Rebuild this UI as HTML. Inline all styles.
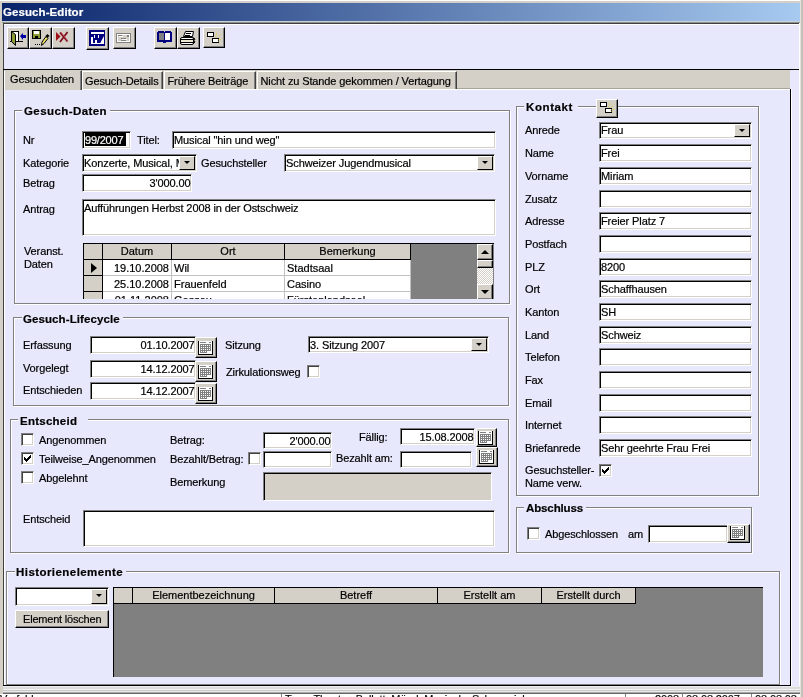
<!DOCTYPE html><html><head><meta charset="utf-8"><style>
*{margin:0;padding:0;box-sizing:border-box}
html,body{width:803px;height:697px;overflow:hidden}
body{position:relative;background:#d4d0c8;font-family:"Liberation Sans",sans-serif;font-size:11px;color:#000;-webkit-font-smoothing:antialiased;will-change:transform}
.l,.tb,.tab,.gh,.gc{-webkit-text-stroke:0.2px}
div{position:absolute}
.l{white-space:nowrap;line-height:13px;letter-spacing:-0.12px}
.tb{background:#fff;border:1px solid;border-color:#808080 #fff #fff #808080;box-shadow:inset 1px 1px #000,inset -1px -1px #d4d0c8;padding:2px 0 0 1px;line-height:13px;white-space:nowrap;overflow:hidden;letter-spacing:-0.1px}
.btn{background:#d4d0c8;border:1px solid;border-color:#fff #000 #000 #fff;box-shadow:inset -1px -1px #808080}
.dd{right:1px;top:1px;bottom:1px;width:16px;background:#d4d0c8;border:1px solid;border-color:#fff #000 #000 #fff}
.dd i{position:absolute;left:4px;top:4px;width:0;height:0;border-left:3px solid transparent;border-right:3px solid transparent;border-top:3px solid #000}
.grp{border:1px solid #808080;box-shadow:inset 1px 1px #fff,1px 1px #fff}
.gt{background:#e7e8fc;font-weight:bold;line-height:13px;padding-left:3px;white-space:nowrap;height:13px}
.ck{width:13px;height:13px;background:#fff;border:1px solid;border-color:#808080 #fff #fff #808080;box-shadow:inset 1px 1px #404040,inset -1px -1px #d4d0c8}
.tab{background:#d4d0c8;border-left:1px solid #fff;border-top:1px solid #fff;border-right:1px solid #404040;box-shadow:inset -1px 0 #808080;line-height:13px;white-space:nowrap;letter-spacing:-0.12px}
.gh{background:#d4d0c8;border-right:1px solid #000;border-bottom:1px solid #000;text-align:center;line-height:14px;white-space:nowrap;overflow:hidden}
.gc{background:#fff;border-right:1px solid #c0c0c0;border-bottom:1px solid #c0c0c0;line-height:14px;white-space:nowrap;overflow:hidden;padding:0 2px}
</style></head><body>
<div style="left:0;top:0;width:803px;height:1px;background:#fff"></div>
<div style="left:2px;top:3px;width:798px;height:18px;background:linear-gradient(to right,#0a246a,#a6caf0)"></div>
<div class="l" style="left:3px;top:6px;color:#fff;font-weight:bold;font-size:11.5px;letter-spacing:0.08px">Gesuch-Editor</div>
<div style="left:3px;top:23px;width:797px;height:670px;background:#e7e8fc;border-left:1px solid #404040;border-top:1px solid #404040"></div>
<div style="left:4px;top:24px;width:795px;height:1px;background:#fff"></div>
<div style="left:2px;top:21px;width:798px;height:1px;background:#c8d0d8"></div>
<div style="left:2px;top:22px;width:798px;height:1px;background:#909090"></div>
<div style="left:799px;top:23px;width:1px;height:670px;background:#fff"></div>
<div style="left:800px;top:0px;width:1px;height:697px;background:#e4e2dc"></div>
<div style="left:801px;top:0px;width:2px;height:697px;background:#c4c0b8"></div>
<div class="btn" style="left:7px;top:27px;width:22px;height:22px;"><svg width="22" height="22" viewBox="0 0 22 22" style="position:absolute;left:-1px;top:-1px" shape-rendering="crispEdges"><rect x="4" y="4" width="8" height="11" fill="#000"/><rect x="5" y="5" width="6" height="9" fill="#fff"/><rect x="3" y="14" width="13" height="1" fill="#000"/><polygon points="4.5,4.5 8.5,7.5 8.5,18.5 4.5,14.5" fill="#8c9a32" stroke="#000" shape-rendering="auto"/><polygon points="13,9 16,6 16,8 19,8 19,11 16,11 16,13" fill="#0000a0" shape-rendering="auto"/></svg></div>
<div class="btn" style="left:29px;top:27px;width:23px;height:22px;"><svg width="23" height="22" viewBox="0 0 23 22" style="position:absolute;left:-1px;top:-1px" shape-rendering="crispEdges"><rect x="3" y="3" width="9" height="9" fill="#000"/><rect x="4" y="4" width="7" height="7" fill="#8c9a32"/><rect x="5" y="4" width="5" height="3" fill="#fff"/><rect x="6" y="9" width="3" height="2" fill="#000"/><rect x="6" y="17" width="1" height="1" fill="#000"/><rect x="8" y="17" width="1" height="1" fill="#000"/><rect x="10" y="17" width="1" height="1" fill="#000"/><polygon points="12.5,18.5 13,15 17,9.5 19,11.5 15,16.5" fill="#e8e060" stroke="#000" shape-rendering="auto"/><polygon points="16.5,9 18.5,7 20.5,9 18.5,11" fill="#000" shape-rendering="auto"/></svg></div>
<div class="btn" style="left:52px;top:27px;width:23px;height:22px;"><svg width="23" height="22" viewBox="0 0 23 22" style="position:absolute;left:-1px;top:-1px" shape-rendering="crispEdges"><polygon points="4,5 8.5,9.5 4,14" fill="#a01018" shape-rendering="auto"/><path d="M8 5.5 L15.5 14.5 M15.5 5 L8 15" stroke="#80101c" stroke-width="1.8" shape-rendering="auto"/><path d="M9 5 L16 14" stroke="#d05060" stroke-width="0.8" shape-rendering="auto"/></svg></div>
<div class="btn" style="left:86px;top:27px;width:23px;height:23px;"><svg width="23" height="23" viewBox="0 0 23 23" style="position:absolute;left:-1px;top:-1px" shape-rendering="crispEdges"><rect x="3" y="3" width="16" height="16" fill="#000080"/><rect x="5" y="5" width="13" height="2" fill="#fff"/><rect x="5" y="10" width="2" height="7" fill="#fff"/><rect x="5" y="16" width="13" height="1" fill="#fff"/><rect x="9" y="13" width="2" height="4" fill="#fff"/><rect x="8" y="8" width="1" height="3" fill="#fff"/><rect x="12" y="8" width="1" height="3" fill="#fff"/><polygon points="18,9 18,16.5 14,16.5" fill="#fff" shape-rendering="auto"/></svg></div>
<div class="btn" style="left:113px;top:27px;width:23px;height:22px;"><svg width="23" height="22" viewBox="0 0 23 22" style="position:absolute;left:-1px;top:-1px" shape-rendering="crispEdges"><rect x="3.5" y="6.5" width="14" height="9" fill="none" stroke="#808080" shape-rendering="auto"/><rect x="4.5" y="7.5" width="12" height="7" fill="none" stroke="#fff" shape-rendering="auto"/><rect x="6" y="9" width="4" height="1" fill="#fff"/><rect x="9" y="12" width="5" height="1" fill="#fff"/><rect x="9" y="14" width="5" height="1" fill="#fff"/><rect x="5" y="8" width="4" height="1" fill="#808080"/><rect x="8" y="11" width="5" height="1" fill="#808080"/><rect x="8" y="13" width="5" height="1" fill="#808080"/><rect x="14" y="8" width="2" height="2" fill="#808080"/></svg></div>
<div class="btn" style="left:154px;top:27px;width:23px;height:22px;"><svg width="23" height="22" viewBox="0 0 23 22" style="position:absolute;left:-1px;top:-1px" shape-rendering="crispEdges"><rect x="5" y="6" width="5" height="7" fill="#808080"/><rect x="11" y="6" width="5" height="7" fill="#fff"/><rect x="3" y="5" width="2" height="9" fill="#000080"/><rect x="4" y="4" width="6" height="2" fill="#000080"/><rect x="11" y="4" width="6" height="2" fill="#000080"/><rect x="16" y="5" width="2" height="9" fill="#000080"/><rect x="3" y="13" width="15" height="2" fill="#000080"/><rect x="10" y="5" width="1" height="10" fill="#000080"/><rect x="9" y="15" width="3" height="1" fill="#000080"/></svg></div>
<div class="btn" style="left:177px;top:27px;width:23px;height:22px;"><svg width="23" height="22" viewBox="0 0 23 22" style="position:absolute;left:-1px;top:-1px" shape-rendering="crispEdges"><polygon points="8.5,4.5 16.5,4.5 15.5,9.5 6.5,9.5" fill="#fff" stroke="#000" shape-rendering="auto"/><path d="M9 6.5h5M8 8.5h5" stroke="#000" shape-rendering="auto"/><rect x="3.5" y="10.5" width="13" height="7" rx="1.5" fill="#fff" stroke="#000" shape-rendering="auto"/><rect x="4" y="13" width="12" height="2" fill="#ece8d0"/><path d="M4 12.5h12M4 15.5h12" stroke="#000" shape-rendering="auto"/><path d="M16 10.5l2 1.5-1 1.5 1 1.5-2 2" stroke="#000" fill="none" shape-rendering="auto"/></svg></div>
<div class="btn" style="left:203px;top:27px;width:22px;height:21px;"><svg width="22" height="21" viewBox="0 0 22 21" style="position:absolute;left:-1px;top:-1px" shape-rendering="crispEdges"><g transform="translate(0,2)"><rect x="4" y="3" width="7" height="5" fill="#000"/><rect x="5" y="4" width="5" height="3" fill="#fff"/><rect x="9" y="9" width="7" height="5" fill="#000"/><rect x="10" y="10" width="5" height="3" fill="#fff"/><path d="M13.5 3.5v3M12 7l2 2M15 8.5l3-3M15.5 10.5h3M15 11.5l2 2" stroke="#d8d070" stroke-width="1" shape-rendering="auto"/></g></svg></div>
<div style="left:3px;top:69px;width:796px;height:1px;background:#000"></div>
<div style="left:4px;top:70px;width:786px;height:19px;background:#d4d0c8"></div>
<div style="left:3px;top:89px;width:788px;height:597px;background:#e7e8fc;border-left:1px solid #404040;border-right:1px solid #000;border-bottom:1px solid #000"></div>
<div style="left:82px;top:89px;width:708px;height:1px;background:#fff"></div>
<div style="left:4px;top:89px;width:1px;height:596px;background:#fff"></div>
<div style="left:457px;top:88px;width:333px;height:1px;background:#a8a49c"></div>
<div style="left:791px;top:89px;width:1px;height:597px;background:#fff"></div>
<div class="tab" style="left:4px;top:70px;width:78px;height:20px;padding-left:5px;padding-top:2px;border-top-color:#d4d0c8">Gesuchdaten</div>
<div class="tab" style="left:82px;top:71px;width:81px;height:18px;padding-left:2px;padding-top:3px">Gesuch-Details</div>
<div class="tab" style="left:164px;top:71px;width:92px;height:18px;padding-left:2.5px;padding-top:3px">Frühere Beiträge</div>
<div class="tab" style="left:257px;top:71px;width:200px;height:18px;padding-left:2.5px;padding-top:3px">Nicht zu Stande gekommen / Vertagung</div>
<div class="grp" style="left:14px;top:110px;width:496px;height:194px;"></div>
<div style="left:22px;top:107px;width:88px;height:6px;background:#e7e8fc"></div>
<div class="l" style="left:24px;top:105px;font-weight:bold;font-size:11.5px;letter-spacing:0.42px">Gesuch-Daten</div>
<div class="l" style="left:23px;top:134px;">Nr</div>
<div class="tb" style="left:82px;top:131px;width:49px;height:18px;"><div style="left:2px;top:1px;width:41px;height:13px;background:#000;color:#fff;line-height:15px;letter-spacing:-0.2px">99/2007</div></div>
<div class="l" style="left:137px;top:134px;">Titel:</div>
<div class="tb" style="left:172px;top:131px;width:324px;height:18px;">Musical "hin und weg"</div>
<div class="l" style="left:23px;top:157px;">Kategorie</div>
<div class="tb" style="left:82px;top:154px;width:115px;height:18px;padding-top:2px">Konzerte, Musical, M<div class="dd"><i></i></div></div>
<div class="l" style="left:201px;top:157px;">Gesuchsteller</div>
<div class="tb" style="left:284px;top:154px;width:211px;height:18px;padding-top:2px">Schweizer Jugendmusical<div class="dd"><i></i></div></div>
<div class="l" style="left:23px;top:177px;">Betrag</div>
<div class="tb" style="left:82px;top:174px;width:110px;height:18px;text-align:right;padding-right:0.5px;">3'000.00</div>
<div class="l" style="left:23px;top:203px;">Antrag</div>
<div class="tb" style="left:82px;top:199px;width:414px;height:37px;">Aufführungen Herbst 2008 in der Ostschweiz</div>
<div class="l" style="left:24px;top:245px;line-height:13px">Veranst.<br>Daten</div>
<div style="left:83px;top:243px;width:411px;height:56px;background:#808080;border-left:1px solid #000;border-top:1px solid #000;overflow:hidden">
<div class="gh" style="left:0px;top:0;width:19px;height:16px"></div>
<div class="gh" style="left:19px;top:0;width:69px;height:16px">Datum</div>
<div class="gh" style="left:88px;top:0;width:113px;height:16px">Ort</div>
<div class="gh" style="left:201px;top:0;width:126px;height:16px">Bemerkung</div>
<div class="gh" style="left:0;top:16px;width:19px;height:16px"></div>
<div style="left:7px;top:19px;width:0;height:0;border-top:5.5px solid transparent;border-bottom:5.5px solid transparent;border-left:6px solid #000"></div>
<div class="gc" style="left:19px;top:16px;width:69px;height:16px;text-align:right;padding-top:1px">19.10.2008</div>
<div class="gc" style="left:88px;top:16px;width:113px;height:16px;padding-top:1px">Wil</div>
<div class="gc" style="left:201px;top:16px;width:126px;height:16px;padding-top:1px">Stadtsaal</div>
<div class="gh" style="left:0;top:32px;width:19px;height:16px"></div>
<div class="gc" style="left:19px;top:32px;width:69px;height:16px;text-align:right;padding-top:1px">25.10.2008</div>
<div class="gc" style="left:88px;top:32px;width:113px;height:16px;padding-top:1px">Frauenfeld</div>
<div class="gc" style="left:201px;top:32px;width:126px;height:16px;padding-top:1px">Casino</div>
<div class="gh" style="left:0;top:48px;width:19px;height:16px"></div>
<div class="gc" style="left:19px;top:48px;width:69px;height:16px;text-align:right;padding-top:1px">01.11.2008</div>
<div class="gc" style="left:88px;top:48px;width:113px;height:16px;padding-top:1px">Gossau</div>
<div class="gc" style="left:201px;top:48px;width:126px;height:16px;padding-top:1px">Fürstenlandsaal</div>
<div style="left:393px;top:0;width:16px;height:55px;background:repeating-conic-gradient(#fff 0 25%,#d4d0c8 0 50%) 0 0/2px 2px"></div>
<div class="btn" style="left:393px;top:0;width:16px;height:16px"><i style="position:absolute;left:3px;top:5px;border-left:4px solid transparent;border-right:4px solid transparent;border-bottom:4px solid #000"></i></div>
<div class="btn" style="left:393px;top:16px;width:16px;height:8px"></div>
<div class="btn" style="left:393px;top:40px;width:16px;height:16px"><i style="position:absolute;left:3px;top:5px;border-left:4px solid transparent;border-right:4px solid transparent;border-top:4px solid #000"></i></div>
</div>
<div class="grp" style="left:13px;top:317px;width:496px;height:89px;"></div>
<div style="left:22px;top:314px;width:101px;height:6px;background:#e7e8fc"></div>
<div class="l" style="left:23px;top:313px;font-weight:bold;font-size:11.5px;letter-spacing:0.09px">Gesuch-Lifecycle</div>
<div class="l" style="left:23px;top:339px;">Erfassung</div>
<div class="tb" style="left:90px;top:336px;width:106px;height:18px;text-align:right;padding-right:0.5px;">01.10.2007</div>
<div class="btn" style="left:195px;top:337px;width:22px;height:21px;"><svg width="22" height="21" viewBox="0 0 22 21" style="position:absolute;left:-1px;top:-1px" shape-rendering="crispEdges"><g transform="translate(0,0)"><rect x="3" y="4" width="15" height="14" fill="#000"/><rect x="4" y="4" width="13" height="13" fill="#fff"/><rect x="5" y="5" width="6" height="1" fill="#808080"/><rect x="14" y="5" width="2" height="1" fill="#808080"/><rect x="5" y="7" width="11" height="7" fill="#808080"/><rect x="5" y="14" width="7" height="2" fill="#808080"/><rect x="6" y="8" width="1" height="1" fill="#fff"/><rect x="8" y="8" width="1" height="1" fill="#fff"/><rect x="10" y="8" width="1" height="1" fill="#fff"/><rect x="12" y="8" width="1" height="1" fill="#fff"/><rect x="14" y="8" width="1" height="1" fill="#fff"/><rect x="6" y="10" width="1" height="1" fill="#fff"/><rect x="8" y="10" width="1" height="1" fill="#fff"/><rect x="10" y="10" width="1" height="1" fill="#fff"/><rect x="12" y="10" width="1" height="1" fill="#fff"/><rect x="14" y="10" width="1" height="1" fill="#fff"/><rect x="6" y="12" width="1" height="1" fill="#fff"/><rect x="8" y="12" width="1" height="1" fill="#fff"/><rect x="10" y="12" width="1" height="1" fill="#fff"/><rect x="12" y="12" width="1" height="1" fill="#fff"/><rect x="14" y="12" width="1" height="1" fill="#fff"/><rect x="6" y="14" width="1" height="1" fill="#fff"/><rect x="8" y="14" width="1" height="1" fill="#fff"/><rect x="10" y="14" width="1" height="1" fill="#fff"/></g></svg></div>
<div class="l" style="left:23px;top:362px;">Vorgelegt</div>
<div class="tb" style="left:90px;top:360px;width:106px;height:18px;text-align:right;padding-right:0.5px;">14.12.2007</div>
<div class="btn" style="left:195px;top:361px;width:22px;height:21px;"><svg width="22" height="21" viewBox="0 0 22 21" style="position:absolute;left:-1px;top:-1px" shape-rendering="crispEdges"><g transform="translate(0,0)"><rect x="3" y="4" width="15" height="14" fill="#000"/><rect x="4" y="4" width="13" height="13" fill="#fff"/><rect x="5" y="5" width="6" height="1" fill="#808080"/><rect x="14" y="5" width="2" height="1" fill="#808080"/><rect x="5" y="7" width="11" height="7" fill="#808080"/><rect x="5" y="14" width="7" height="2" fill="#808080"/><rect x="6" y="8" width="1" height="1" fill="#fff"/><rect x="8" y="8" width="1" height="1" fill="#fff"/><rect x="10" y="8" width="1" height="1" fill="#fff"/><rect x="12" y="8" width="1" height="1" fill="#fff"/><rect x="14" y="8" width="1" height="1" fill="#fff"/><rect x="6" y="10" width="1" height="1" fill="#fff"/><rect x="8" y="10" width="1" height="1" fill="#fff"/><rect x="10" y="10" width="1" height="1" fill="#fff"/><rect x="12" y="10" width="1" height="1" fill="#fff"/><rect x="14" y="10" width="1" height="1" fill="#fff"/><rect x="6" y="12" width="1" height="1" fill="#fff"/><rect x="8" y="12" width="1" height="1" fill="#fff"/><rect x="10" y="12" width="1" height="1" fill="#fff"/><rect x="12" y="12" width="1" height="1" fill="#fff"/><rect x="14" y="12" width="1" height="1" fill="#fff"/><rect x="6" y="14" width="1" height="1" fill="#fff"/><rect x="8" y="14" width="1" height="1" fill="#fff"/><rect x="10" y="14" width="1" height="1" fill="#fff"/></g></svg></div>
<div class="l" style="left:23px;top:384px;">Entschieden</div>
<div class="tb" style="left:90px;top:382px;width:106px;height:18px;text-align:right;padding-right:0.5px;">14.12.2007</div>
<div class="btn" style="left:195px;top:383px;width:22px;height:21px;"><svg width="22" height="21" viewBox="0 0 22 21" style="position:absolute;left:-1px;top:-1px" shape-rendering="crispEdges"><g transform="translate(0,0)"><rect x="3" y="4" width="15" height="14" fill="#000"/><rect x="4" y="4" width="13" height="13" fill="#fff"/><rect x="5" y="5" width="6" height="1" fill="#808080"/><rect x="14" y="5" width="2" height="1" fill="#808080"/><rect x="5" y="7" width="11" height="7" fill="#808080"/><rect x="5" y="14" width="7" height="2" fill="#808080"/><rect x="6" y="8" width="1" height="1" fill="#fff"/><rect x="8" y="8" width="1" height="1" fill="#fff"/><rect x="10" y="8" width="1" height="1" fill="#fff"/><rect x="12" y="8" width="1" height="1" fill="#fff"/><rect x="14" y="8" width="1" height="1" fill="#fff"/><rect x="6" y="10" width="1" height="1" fill="#fff"/><rect x="8" y="10" width="1" height="1" fill="#fff"/><rect x="10" y="10" width="1" height="1" fill="#fff"/><rect x="12" y="10" width="1" height="1" fill="#fff"/><rect x="14" y="10" width="1" height="1" fill="#fff"/><rect x="6" y="12" width="1" height="1" fill="#fff"/><rect x="8" y="12" width="1" height="1" fill="#fff"/><rect x="10" y="12" width="1" height="1" fill="#fff"/><rect x="12" y="12" width="1" height="1" fill="#fff"/><rect x="14" y="12" width="1" height="1" fill="#fff"/><rect x="6" y="14" width="1" height="1" fill="#fff"/><rect x="8" y="14" width="1" height="1" fill="#fff"/><rect x="10" y="14" width="1" height="1" fill="#fff"/></g></svg></div>
<div class="l" style="left:225px;top:339px;">Sitzung</div>
<div class="tb" style="left:308px;top:336px;width:181px;height:17px;padding-top:2px">3. Sitzung 2007<div class="dd"><i></i></div></div>
<div class="l" style="left:226px;top:366px;">Zirkulationsweg</div>
<div class="ck" style="left:307px;top:365px;"></div>
<div class="grp" style="left:10px;top:419px;width:499px;height:134px;"></div>
<div style="left:18px;top:416px;width:70px;height:6px;background:#e7e8fc"></div>
<div class="l" style="left:20px;top:415px;font-weight:bold;font-size:11.5px;letter-spacing:0.25px">Entscheid</div>
<div class="ck" style="left:21px;top:433px;"></div>
<div class="l" style="left:39px;top:434px;">Angenommen</div>
<div class="ck" style="left:21px;top:452px;"><svg width="7" height="7" style="position:absolute;left:2px;top:2px" viewBox="0 0 7 7" shape-rendering="crispEdges"><path d="M0 2h1v1h1v1h1v-1h1v-1h1v-1h1v-1h1v3h-1v1h-1v1h-1v1h-1v1h-1v-1h-1v-1h-1v-1h-1z" fill="#000"/></svg></div>
<div class="l" style="left:39px;top:453px;">Teilweise_Angenommen</div>
<div class="ck" style="left:21px;top:471px;"></div>
<div class="l" style="left:39px;top:472px;">Abgelehnt</div>
<div class="l" style="left:170px;top:434px;">Betrag:</div>
<div class="tb" style="left:263px;top:432px;width:69px;height:17px;text-align:right;padding-right:0.5px;">2'000.00</div>
<div class="l" style="left:170px;top:453px;">Bezahlt/Betrag:</div>
<div class="ck" style="left:248px;top:452px;"></div>
<div class="tb" style="left:263px;top:451px;width:69px;height:17px;"></div>
<div class="l" style="left:170px;top:476px;">Bemerkung</div>
<div class="tb" style="left:263px;top:472px;width:229px;height:29px;background:#d4d0c8;"></div>
<div class="l" style="left:359px;top:431px;">Fällig:</div>
<div class="tb" style="left:400px;top:428px;width:75px;height:17px;text-align:right;padding-right:0.5px;">15.08.2008</div>
<div class="btn" style="left:476px;top:428px;width:21px;height:19px;"><svg width="21" height="19" viewBox="0 0 21 19" style="position:absolute;left:-1px;top:-1px" shape-rendering="crispEdges"><g transform="translate(-1,-1)"><rect x="3" y="4" width="15" height="14" fill="#000"/><rect x="4" y="4" width="13" height="13" fill="#fff"/><rect x="5" y="5" width="6" height="1" fill="#808080"/><rect x="14" y="5" width="2" height="1" fill="#808080"/><rect x="5" y="7" width="11" height="7" fill="#808080"/><rect x="5" y="14" width="7" height="2" fill="#808080"/><rect x="6" y="8" width="1" height="1" fill="#fff"/><rect x="8" y="8" width="1" height="1" fill="#fff"/><rect x="10" y="8" width="1" height="1" fill="#fff"/><rect x="12" y="8" width="1" height="1" fill="#fff"/><rect x="14" y="8" width="1" height="1" fill="#fff"/><rect x="6" y="10" width="1" height="1" fill="#fff"/><rect x="8" y="10" width="1" height="1" fill="#fff"/><rect x="10" y="10" width="1" height="1" fill="#fff"/><rect x="12" y="10" width="1" height="1" fill="#fff"/><rect x="14" y="10" width="1" height="1" fill="#fff"/><rect x="6" y="12" width="1" height="1" fill="#fff"/><rect x="8" y="12" width="1" height="1" fill="#fff"/><rect x="10" y="12" width="1" height="1" fill="#fff"/><rect x="12" y="12" width="1" height="1" fill="#fff"/><rect x="14" y="12" width="1" height="1" fill="#fff"/><rect x="6" y="14" width="1" height="1" fill="#fff"/><rect x="8" y="14" width="1" height="1" fill="#fff"/><rect x="10" y="14" width="1" height="1" fill="#fff"/></g></svg></div>
<div class="l" style="left:336px;top:452px;">Bezahlt am:</div>
<div class="tb" style="left:400px;top:451px;width:72px;height:17px;"></div>
<div class="btn" style="left:476px;top:447px;width:22px;height:20px;"><svg width="22" height="20" viewBox="0 0 22 20" style="position:absolute;left:-1px;top:-1px" shape-rendering="crispEdges"><g transform="translate(0,-1)"><rect x="3" y="4" width="15" height="14" fill="#000"/><rect x="4" y="4" width="13" height="13" fill="#fff"/><rect x="5" y="5" width="6" height="1" fill="#808080"/><rect x="14" y="5" width="2" height="1" fill="#808080"/><rect x="5" y="7" width="11" height="7" fill="#808080"/><rect x="5" y="14" width="7" height="2" fill="#808080"/><rect x="6" y="8" width="1" height="1" fill="#fff"/><rect x="8" y="8" width="1" height="1" fill="#fff"/><rect x="10" y="8" width="1" height="1" fill="#fff"/><rect x="12" y="8" width="1" height="1" fill="#fff"/><rect x="14" y="8" width="1" height="1" fill="#fff"/><rect x="6" y="10" width="1" height="1" fill="#fff"/><rect x="8" y="10" width="1" height="1" fill="#fff"/><rect x="10" y="10" width="1" height="1" fill="#fff"/><rect x="12" y="10" width="1" height="1" fill="#fff"/><rect x="14" y="10" width="1" height="1" fill="#fff"/><rect x="6" y="12" width="1" height="1" fill="#fff"/><rect x="8" y="12" width="1" height="1" fill="#fff"/><rect x="10" y="12" width="1" height="1" fill="#fff"/><rect x="12" y="12" width="1" height="1" fill="#fff"/><rect x="14" y="12" width="1" height="1" fill="#fff"/><rect x="6" y="14" width="1" height="1" fill="#fff"/><rect x="8" y="14" width="1" height="1" fill="#fff"/><rect x="10" y="14" width="1" height="1" fill="#fff"/></g></svg></div>
<div class="l" style="left:23px;top:513px;">Entscheid</div>
<div class="tb" style="left:83px;top:510px;width:412px;height:37px;"></div>
<div class="grp" style="left:516px;top:106px;width:243px;height:390px;"></div>
<div style="left:524px;top:103px;width:54px;height:6px;background:#e7e8fc"></div>
<div class="l" style="left:526px;top:101px;font-weight:bold;font-size:11.5px;letter-spacing:0.6px">Kontakt</div>
<div class="btn" style="left:596px;top:99px;width:22px;height:19px;"><svg width="22" height="19" viewBox="0 0 22 19" style="position:absolute;left:-1px;top:-1px" shape-rendering="crispEdges"><g transform="translate(0,0)"><rect x="4" y="3" width="7" height="5" fill="#000"/><rect x="5" y="4" width="5" height="3" fill="#fff"/><rect x="9" y="9" width="7" height="5" fill="#000"/><rect x="10" y="10" width="5" height="3" fill="#fff"/><path d="M13.5 3.5v3M12 7l2 2M15 8.5l3-3M15.5 10.5h3M15 11.5l2 2" stroke="#d8d070" stroke-width="1" shape-rendering="auto"/></g></svg></div>
<div class="l" style="left:525px;top:124px;">Anrede</div>
<div class="tb" style="left:599px;top:122px;width:153px;height:17px;padding-top:1px">Frau<div class="dd"><i></i></div></div>
<div class="l" style="left:525px;top:147px;">Name</div>
<div class="tb" style="left:599px;top:144px;width:153px;height:18px;">Frei</div>
<div class="l" style="left:525px;top:170px;">Vorname</div>
<div class="tb" style="left:599px;top:167px;width:153px;height:18px;">Miriam</div>
<div class="l" style="left:525px;top:193px;">Zusatz</div>
<div class="tb" style="left:599px;top:190px;width:153px;height:18px;"></div>
<div class="l" style="left:525px;top:215px;">Adresse</div>
<div class="tb" style="left:599px;top:212px;width:153px;height:18px;">Freier Platz 7</div>
<div class="l" style="left:525px;top:238px;">Postfach</div>
<div class="tb" style="left:599px;top:235px;width:153px;height:18px;"></div>
<div class="l" style="left:525px;top:261px;">PLZ</div>
<div class="tb" style="left:599px;top:258px;width:153px;height:18px;">8200</div>
<div class="l" style="left:525px;top:283px;">Ort</div>
<div class="tb" style="left:599px;top:280px;width:153px;height:18px;">Schaffhausen</div>
<div class="l" style="left:525px;top:306px;">Kanton</div>
<div class="tb" style="left:599px;top:303px;width:153px;height:18px;">SH</div>
<div class="l" style="left:525px;top:329px;">Land</div>
<div class="tb" style="left:599px;top:326px;width:153px;height:18px;">Schweiz</div>
<div class="l" style="left:525px;top:351px;">Telefon</div>
<div class="tb" style="left:599px;top:348px;width:153px;height:18px;"></div>
<div class="l" style="left:525px;top:374px;">Fax</div>
<div class="tb" style="left:599px;top:371px;width:153px;height:18px;"></div>
<div class="l" style="left:525px;top:397px;">Email</div>
<div class="tb" style="left:599px;top:394px;width:153px;height:18px;"></div>
<div class="l" style="left:525px;top:419px;">Internet</div>
<div class="tb" style="left:599px;top:416px;width:153px;height:18px;"></div>
<div class="l" style="left:525px;top:442px;">Briefanrede</div>
<div class="tb" style="left:599px;top:439px;width:153px;height:18px;">Sehr geehrte Frau Frei</div>
<div class="l" style="left:525px;top:464px;line-height:13px">Gesuchsteller-<br>Name verw.</div>
<div class="ck" style="left:599px;top:464px;"><svg width="7" height="7" style="position:absolute;left:2px;top:2px" viewBox="0 0 7 7" shape-rendering="crispEdges"><path d="M0 2h1v1h1v1h1v-1h1v-1h1v-1h1v-1h1v3h-1v1h-1v1h-1v1h-1v1h-1v-1h-1v-1h-1v-1h-1z" fill="#000"/></svg></div>
<div class="grp" style="left:516px;top:507px;width:236px;height:46px;"></div>
<div style="left:524px;top:504px;width:62px;height:6px;background:#e7e8fc"></div>
<div class="l" style="left:526px;top:502px;font-weight:bold;font-size:11.5px;letter-spacing:-0.12px">Abschluss</div>
<div class="ck" style="left:527px;top:527px;"></div>
<div class="l" style="left:545px;top:528px;">Abgeschlossen</div>
<div class="l" style="left:628px;top:528px;">am</div>
<div class="tb" style="left:648px;top:525px;width:80px;height:18px;"></div>
<div class="btn" style="left:727px;top:524px;width:23px;height:19px;"><svg width="23" height="19" viewBox="0 0 23 19" style="position:absolute;left:-1px;top:-1px" shape-rendering="crispEdges"><g transform="translate(0,-2)"><rect x="3" y="4" width="15" height="14" fill="#000"/><rect x="4" y="4" width="13" height="13" fill="#fff"/><rect x="5" y="5" width="6" height="1" fill="#808080"/><rect x="14" y="5" width="2" height="1" fill="#808080"/><rect x="5" y="7" width="11" height="7" fill="#808080"/><rect x="5" y="14" width="7" height="2" fill="#808080"/><rect x="6" y="8" width="1" height="1" fill="#fff"/><rect x="8" y="8" width="1" height="1" fill="#fff"/><rect x="10" y="8" width="1" height="1" fill="#fff"/><rect x="12" y="8" width="1" height="1" fill="#fff"/><rect x="14" y="8" width="1" height="1" fill="#fff"/><rect x="6" y="10" width="1" height="1" fill="#fff"/><rect x="8" y="10" width="1" height="1" fill="#fff"/><rect x="10" y="10" width="1" height="1" fill="#fff"/><rect x="12" y="10" width="1" height="1" fill="#fff"/><rect x="14" y="10" width="1" height="1" fill="#fff"/><rect x="6" y="12" width="1" height="1" fill="#fff"/><rect x="8" y="12" width="1" height="1" fill="#fff"/><rect x="10" y="12" width="1" height="1" fill="#fff"/><rect x="12" y="12" width="1" height="1" fill="#fff"/><rect x="14" y="12" width="1" height="1" fill="#fff"/><rect x="6" y="14" width="1" height="1" fill="#fff"/><rect x="8" y="14" width="1" height="1" fill="#fff"/><rect x="10" y="14" width="1" height="1" fill="#fff"/></g></svg></div>
<div class="grp" style="left:6px;top:571px;width:774px;height:114px;"></div>
<div style="left:15px;top:568px;width:111px;height:6px;background:#e7e8fc"></div>
<div class="l" style="left:16px;top:566px;font-weight:bold;font-size:11.5px;letter-spacing:0.44px">Historienelemente</div>
<div class="tb" style="left:15px;top:587px;width:94px;height:19px;padding-top:2px"><div class="dd"><i></i></div></div>
<div class="btn" style="left:15px;top:610px;width:94px;height:18px;"><div class="l" style="left:7px;top:2px;letter-spacing:-0.2px">Element löschen</div></div>
<div style="left:113px;top:587px;width:650px;height:90px;background:#808080;border-left:1px solid #000;border-top:1px solid #000;overflow:hidden">
<div class="gh" style="left:0px;top:0;width:19px;height:16px"></div>
<div class="gh" style="left:19px;top:0;width:142px;height:16px">Elementbezeichnung</div>
<div class="gh" style="left:161px;top:0;width:163px;height:16px">Betreff</div>
<div class="gh" style="left:324px;top:0;width:104px;height:16px">Erstellt am</div>
<div class="gh" style="left:428px;top:0;width:94px;height:16px">Erstellt durch</div>
</div>
<div style="left:3px;top:685px;width:788px;height:1px;background:#000"></div>
<div style="left:0;top:686px;width:800px;height:1px;background:#ececf4"></div>
<div style="left:0;top:687px;width:800px;height:1px;background:#dcdcdc"></div>
<div style="left:0;top:688px;width:800px;height:1px;background:#dcdcdc"></div>
<div style="left:0;top:689px;width:800px;height:1px;background:#f4f4f4"></div>
<div style="left:0;top:690px;width:800px;height:1px;background:#c8c8c8"></div>
<div style="left:0;top:691px;width:800px;height:1px;background:#ececec"></div>
<div style="left:0;top:692px;width:800px;height:1px;background:#a8a8a8"></div>
<div style="left:0;top:693px;width:800px;height:1px;background:#686868"></div>
<div style="left:0;top:694px;width:800px;height:1px;background:#fff"></div>
<div style="left:0;top:695px;width:800px;height:1px;background:#fff"></div>
<div style="left:0;top:696px;width:800px;height:1px;background:#fff"></div>
<div style="left:0;top:686px;width:3px;height:8px;background:#d4d0c8"></div>
<div style="left:0;top:694px;width:800px;height:3px;overflow:hidden"><div class="l" style="left:0;top:-1px">Vorfeld</div><div style="left:281px;top:0;width:1px;height:3px;background:#808080"></div><div class="l" style="left:285px;top:-1px">Tanz, Theater, Ballett, Münd, Musicals, Schauspiel</div><div style="left:625px;top:0;width:1px;height:3px;background:#808080"></div><div class="l" style="left:655px;top:-1px">2008</div><div style="left:682px;top:0;width:1px;height:3px;background:#808080"></div><div class="l" style="left:686px;top:-1px">08.08.2007</div><div style="left:751px;top:0;width:1px;height:3px;background:#808080"></div><div class="l" style="left:755px;top:-1px">08.08.08</div></div>
</body></html>
